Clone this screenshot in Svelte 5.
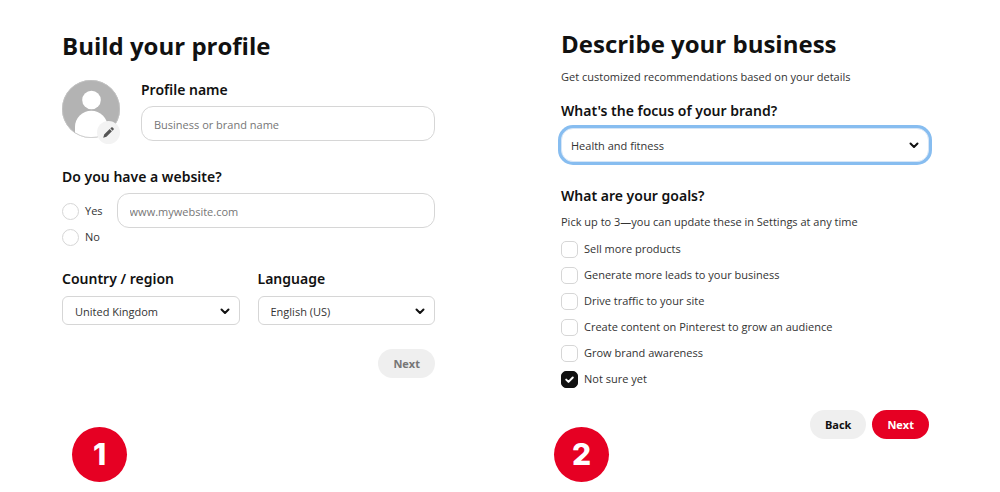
<script>
	let profileName = "";
	let website = "";
	let hasWebsite = "";
	let country = "United Kingdom";
	let language = "English (US)";
	let focus = "Health and fitness";

	let goals = [
		{ id: "sell", label: "Sell more products", checked: false },
		{ id: "leads", label: "Generate more leads to your business", checked: false },
		{ id: "traffic", label: "Drive traffic to your site", checked: false },
		{ id: "content", label: "Create content on Pinterest to grow an audience", checked: false },
		{ id: "awareness", label: "Grow brand awareness", checked: false },
		{ id: "unsure", label: "Not sure yet", checked: true },
	];
</script>

<main class="steps">
	<section class="step">
		<form class="profile-form" on:submit|preventDefault>
			<h1>Build your profile</h1>

			<div class="profile-row">
				<div class="avatar">
					<svg class="avatar-image" viewBox="0 0 58 58" aria-hidden="true">
						<defs>
							<clipPath id="avatar-clip">
								<circle cx="29" cy="29" r="29" />
							</clipPath>
						</defs>
						<g clip-path="url(#avatar-clip)">
							<rect width="58" height="58" fill="#b3b3b3" />
							<circle cx="29.500" cy="20" r="9.300" fill="#fff" />
							<path d="M13 58V47a16.300 16.300 0 0 1 32.600 0v11z" fill="#fff" />
						</g>
						<circle cx="29" cy="29" r="28.600" fill="none" stroke="#c4c4c4" stroke-width="0.800" />
					</svg>
					<button type="button" class="avatar-edit" aria-label="Edit profile picture">
						<svg width="11" height="11" viewBox="0 0 24 24" fill="#555">
							<path d="M0.500 23.500l2-7L14.500 4.500l5 5L7.500 21.500zM16 3l1.800-1.800a2.600 2.600 0 0 1 3.600 0l1.400 1.400a2.600 2.600 0 0 1 0 3.600L21 8z" />
						</svg>
					</button>
				</div>
				<div class="profile-name">
					<label class="title" for="profile-name">Profile name</label>
					<input
						type="text"
						id="profile-name"
						class="text-input"
						placeholder="Business or brand name"
						bind:value={profileName}
					/>
				</div>
			</div>

			<fieldset class="website">
				<legend class="title">Do you have a website?</legend>
				<div class="website-row">
					<div class="radios">
						<label class="option">
							<input type="radio" name="website" value="yes" bind:group={hasWebsite} />
							Yes
						</label>
						<label class="option">
							<input type="radio" name="website" value="no" bind:group={hasWebsite} />
							No
						</label>
					</div>
					<input
						type="text"
						class="text-input"
						placeholder="www.mywebsite.com"
						aria-label="Website address"
						bind:value={website}
					/>
				</div>
			</fieldset>

			<div class="locale-row">
				<div class="field">
					<label class="title" for="country">Country / region</label>
					<div class="select-wrapper">
						<select id="country" bind:value={country}>
							<option>United Kingdom</option>
						</select>
						<svg class="chevron" viewBox="0 0 10 7"><path d="M1.500 1.500L5 5l3.500-3.500" /></svg>
					</div>
				</div>
				<div class="field">
					<label class="title" for="language">Language</label>
					<div class="select-wrapper">
						<select id="language" bind:value={language}>
							<option>English (US)</option>
						</select>
						<svg class="chevron" viewBox="0 0 10 7"><path d="M1.500 1.500L5 5l3.500-3.500" /></svg>
					</div>
				</div>
			</div>

			<div class="actions">
				<button type="submit" class="button" disabled>Next</button>
			</div>
		</form>
		<div class="badge">1</div>
	</section>

	<section class="step">
		<form class="business-form" on:submit|preventDefault>
			<h1>Describe your business</h1>
			<p>Get customized recommendations based on your details</p>

			<label class="title" for="focus">What's the focus of your brand?</label>
			<div class="select-wrapper highlighted">
				<select id="focus" bind:value={focus}>
					<option>Health and fitness</option>
				</select>
				<svg class="chevron" viewBox="0 0 10 7"><path d="M1.500 1.500L5 5l3.500-3.500" /></svg>
			</div>

			<fieldset class="goals">
				<legend class="title">What are your goals?</legend>
				<p>Pick up to 3—you can update these in Settings at any time</p>
				<div class="goal-list">
					{#each goals as goal (goal.id)}
						<label class="option">
							<input type="checkbox" bind:checked={goal.checked} />
							<svg class="tick" viewBox="0 0 17 17" aria-hidden="true">
								<path d="M5.200 8.600l2.300 2.300 4.300-4.400" />
							</svg>
							{goal.label}
						</label>
					{/each}
				</div>
			</fieldset>

			<div class="actions">
				<button type="button" class="button">Back</button>
				<button type="submit" class="button primary">Next</button>
			</div>
		</form>
		<div class="badge">2</div>
	</section>
</main>

<style>
	:global(body) {
		background-color: #ffffff;
	}

	.steps {
		display: grid;
		grid-template-columns: 1fr 1fr;
		color: #111111;
		font-family: "Segoe UI", "Open Sans", "Noto Sans", sans-serif;
		font-size: 11px;
		line-height: 16px;
	}

	.step {
		position: relative;
		padding-bottom: 10px;
	}

	.profile-form {
		padding: 30px 65px 0 62px;
	}

	.business-form {
		padding: 28px 71px 43px 61px;
	}

	h1 {
		margin: 0;
		font-size: 24px;
		font-weight: 700;
		line-height: 32px;
	}

	p {
		margin: 0;
		color: #333333;
	}

	fieldset {
		margin: 0;
		padding: 0;
		border: none;
		min-width: 0;
	}

	legend {
		padding: 0;
	}

	.title {
		display: block;
		font-family: "Segoe UI", "Noto Sans", sans-serif;
		font-size: 14px;
		font-weight: 600;
		line-height: 20px;
	}

	.profile-row {
		display: flex;
		gap: 21px;
		margin-top: 18px;
	}

	.avatar {
		position: relative;
		width: 58px;
		height: 58px;
	}

	.avatar-image {
		display: block;
		width: 100%;
		height: 100%;
	}

	.avatar-edit {
		position: absolute;
		right: 0;
		bottom: -6px;
		display: flex;
		align-items: center;
		justify-content: center;
		width: 23px;
		height: 23px;
		padding: 0;
		border: none;
		border-radius: 50%;
		background-color: #f3f3f3;
		cursor: pointer;
	}

	.profile-name {
		flex: 1;
	}

	.profile-name .text-input {
		margin-top: 6px;
	}

	.text-input {
		display: block;
		width: 100%;
		height: 35px;
		padding: 1px 12px 0;
		box-sizing: border-box;
		border: 1px solid #d6d6d6;
		border-radius: 12px;
		background-color: #ffffff;
		color: #333333;
		font: inherit;
		outline: none;
	}

	.text-input::placeholder {
		color: #767676;
		opacity: 1;
	}

	.website {
		margin-top: 26px;
	}

	.website-row {
		display: flex;
		gap: 14px;
		margin-top: 6px;
	}

	.radios {
		display: flex;
		flex-direction: column;
		gap: 8px;
		padding-top: 9px;
	}

	.website .text-input {
		flex: 1;
		width: auto;
		min-width: 0;
	}

	.option {
		position: relative;
		display: flex;
		align-items: center;
		gap: 6px;
		height: 18px;
		color: #333333;
	}

	.option input {
		appearance: none;
		box-sizing: border-box;
		flex: none;
		width: 17px;
		height: 17px;
		margin: 0;
		border: 1px solid #d6d6d6;
		background-color: #ffffff;
	}

	.option input[type="radio"] {
		border-radius: 50%;
	}

	.option input[type="radio"]:checked {
		border: 5px solid #111111;
	}

	.option input[type="checkbox"] {
		border-radius: 5px;
	}

	.option input[type="checkbox"]:checked {
		border-color: #111111;
		background-color: #111111;
	}

	.tick {
		position: absolute;
		left: 0;
		width: 17px;
		height: 17px;
		fill: none;
		stroke: #ffffff;
		stroke-width: 2;
		stroke-linecap: round;
		stroke-linejoin: round;
		pointer-events: none;
	}

	.locale-row {
		display: grid;
		grid-template-columns: 1fr 1fr;
		gap: 18px;
		margin-top: 23px;
	}

	.select-wrapper {
		position: relative;
		margin-top: 7px;
	}

	.select-wrapper select {
		appearance: none;
		display: block;
		width: 100%;
		height: 29px;
		padding: 2px 28px 0 12px;
		box-sizing: border-box;
		border: 1px solid #d6d6d6;
		border-radius: 6px;
		background-color: #ffffff;
		color: #333333;
		font: inherit;
		outline: none;
	}

	.select-wrapper.highlighted select {
		height: 34px;
		padding-left: 9px;
		border-color: #d6e6f7;
		border-radius: 12px;
		box-shadow: 0 0 0 3px #87bdf0;
	}

	.chevron {
		position: absolute;
		top: 50%;
		right: 10px;
		width: 10px;
		height: 7px;
		margin-top: -3px;
		fill: none;
		stroke: #111111;
		stroke-width: 2;
		stroke-linecap: round;
		stroke-linejoin: round;
		pointer-events: none;
	}

	.business-form > p {
		margin: 9px 0 16px;
	}

	.goals {
		margin-top: 24px;
	}

	.goals p {
		margin-top: 8px;
	}

	.goal-list {
		display: flex;
		flex-direction: column;
		gap: 8px;
		margin-top: 10px;
	}

	.actions {
		display: flex;
		justify-content: flex-end;
		gap: 6px;
		margin-top: 24px;
	}

	.business-form .actions {
		margin-top: 22px;
	}

	.button {
		height: 29px;
		padding: 1px 15px 0;
		border: none;
		border-radius: 15px;
		background-color: #efefef;
		color: #111111;
		font: inherit;
		font-weight: 700;
		cursor: pointer;
	}

	.button:disabled {
		color: #767676;
		cursor: default;
	}

	.button.primary {
		background-color: #e60023;
		color: #ffffff;
	}

	.badge {
		position: absolute;
		bottom: 10px;
		left: 72px;
		width: 55px;
		height: 55px;
		border-radius: 50%;
		background-color: #e60023;
		color: #ffffff;
		font-family: Inter, sans-serif;
		font-size: 30px;
		font-weight: 800;
		line-height: 55px;
		text-align: center;
	}

	.business-form + .badge {
		left: 54px;
	}
</style>
